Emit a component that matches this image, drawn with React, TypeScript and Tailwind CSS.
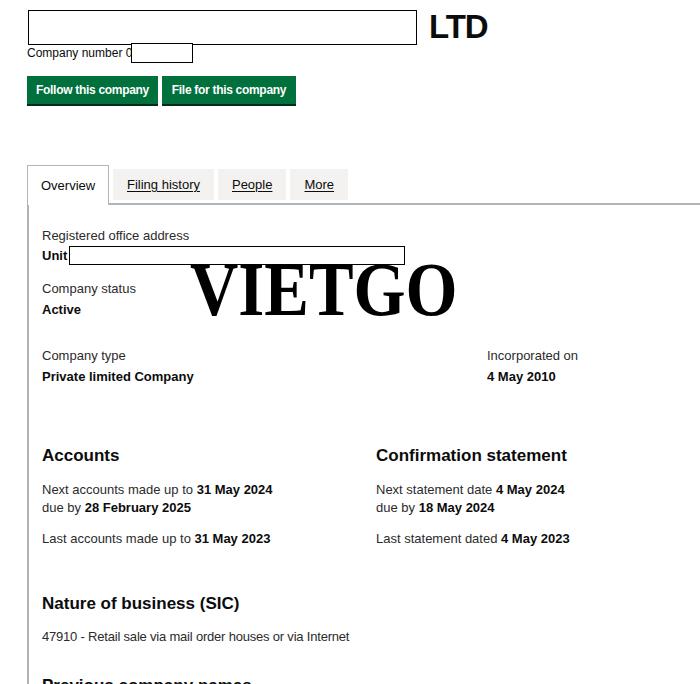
const sans = "font-['Liberation_Sans',Arial,sans-serif]";

const Label = ({ children, className = '' }: { children: React.ReactNode; className?: string }) => (
  <p className={`text-[13px] leading-[18px] text-[#2b2b2b] ${className}`}>{children}</p>
);

const Value = ({ children, className = '' }: { children: React.ReactNode; className?: string }) => (
  <p className={`text-[13px] leading-[18px] font-bold text-[#0b0c0c] ${className}`}>{children}</p>
);

const Heading = ({ children, className = '' }: { children: React.ReactNode; className?: string }) => (
  <h2 className={`text-[17px] leading-[22px] font-bold text-[#0b0c0c] ${className}`}>{children}</h2>
);

const Tab = ({ label }: { label: string }) => (
  <a className="ml-[4px] mb-[3px] flex h-[31px] items-center bg-[#f3f2f1] px-[14px] text-[13px] text-[#0b0c0c] underline underline-offset-2">
    {label}
  </a>
);

export default function App() {
  return (
    <div className={`relative h-[684px] w-[700px] overflow-hidden bg-white pl-[27px] ${sans}`}>
      {/* title */}
      <div className="mt-[10px] flex items-start">
        <div className="ml-[1px] h-[35px] w-[389px] border border-black bg-white" />
        <h1 className="ml-[12px] mt-[-1px] text-[33px] leading-[36px] font-bold tracking-[-1px] text-[#0b0c0c]">LTD</h1>
      </div>
      <div className="flex h-[20px] items-center -mt-[2px]">
        <span className="text-[12px] text-[#0b0c0c]">Company number 0</span>
        <div className="-ml-[1px] h-[20px] w-[62px] border border-black bg-white" />
      </div>

      {/* buttons */}
      <div className="mt-[13px] flex gap-[4px]">
        <button className="h-[28px] w-[131px] bg-[#00703c] text-[12px] font-bold tracking-[-0.3px] text-white shadow-[0_2px_0_#002d18]">
          Follow this company
        </button>
        <button className="h-[28px] w-[134px] bg-[#00703c] text-[12px] font-bold tracking-[-0.3px] text-white shadow-[0_2px_0_#002d18]">
          File for this company
        </button>
      </div>

      {/* tabs */}
      <div className="mt-[61px] flex items-end">
        <div className="relative z-10 -mb-[2px] flex h-[40px] w-[82px] items-start border border-b-0 border-[#b1b4b6] bg-white pl-[13px] pt-[10px] text-[13px] text-[#0b0c0c]">
          Overview
        </div>
        <Tab label="Filing history" />
        <Tab label="People" />
        <Tab label="More" />
      </div>

      {/* panel */}
      <div className="w-[800px] border-l-2 border-t-2 border-[#b1b4b6] pl-[13px] pt-[22px]">
        <Label>Registered office address</Label>
        <div className="mt-[2px] flex h-[18px] items-center">
          <Value>Unit</Value>
          <div className="ml-[2px] -mt-[1px] h-[19px] w-[336px] border border-black bg-white" />
        </div>

        <Label className="mt-[15px]">Company status</Label>
        <Value className="mt-[3px]">Active</Value>

        <div className="mt-[28px] grid grid-cols-[445px_200px]">
          <div>
            <Label>Company type</Label>
            <Value className="mt-[3px]">Private limited Company</Value>
          </div>
          <div>
            <Label>Incorporated on</Label>
            <Value className="mt-[3px]">4 May 2010</Value>
          </div>
        </div>

        <div className="mt-[59px] grid grid-cols-[334px_300px]">
          <div>
            <Heading>Accounts</Heading>
            <Label className="mt-[14px]">
              Next accounts made up to <b className="text-[#0b0c0c]">31 May 2024</b>
              <br />
              due by <b className="text-[#0b0c0c]">28 February 2025</b>
            </Label>
            <Label className="mt-[13px]">
              Last accounts made up to <b className="text-[#0b0c0c]">31 May 2023</b>
            </Label>
          </div>
          <div>
            <Heading>Confirmation statement</Heading>
            <Label className="mt-[14px]">
              Next statement date <b className="text-[#0b0c0c]">4 May 2024</b>
              <br />
              due by <b className="text-[#0b0c0c]">18 May 2024</b>
            </Label>
            <Label className="mt-[13px]">
              Last statement dated <b className="text-[#0b0c0c]">4 May 2023</b>
            </Label>
          </div>
        </div>

        <Heading className="mt-[45px]">Nature of business (SIC)</Heading>
        <Label className="mt-[13px] text-[12px] tracking-[-0.2px]">47910 - Retail sale via mail order houses or via Internet</Label>

        <Heading className="mt-[29px]">Previous company names</Heading>
      </div>

      {/* watermark */}
      <div className="pointer-events-none absolute left-[190px] top-[251px] origin-left scale-x-[0.88] font-['Liberation_Serif','Times_New_Roman',serif] text-[76px] font-bold leading-none text-black">
        VIETGO
      </div>
    </div>
  );
}
